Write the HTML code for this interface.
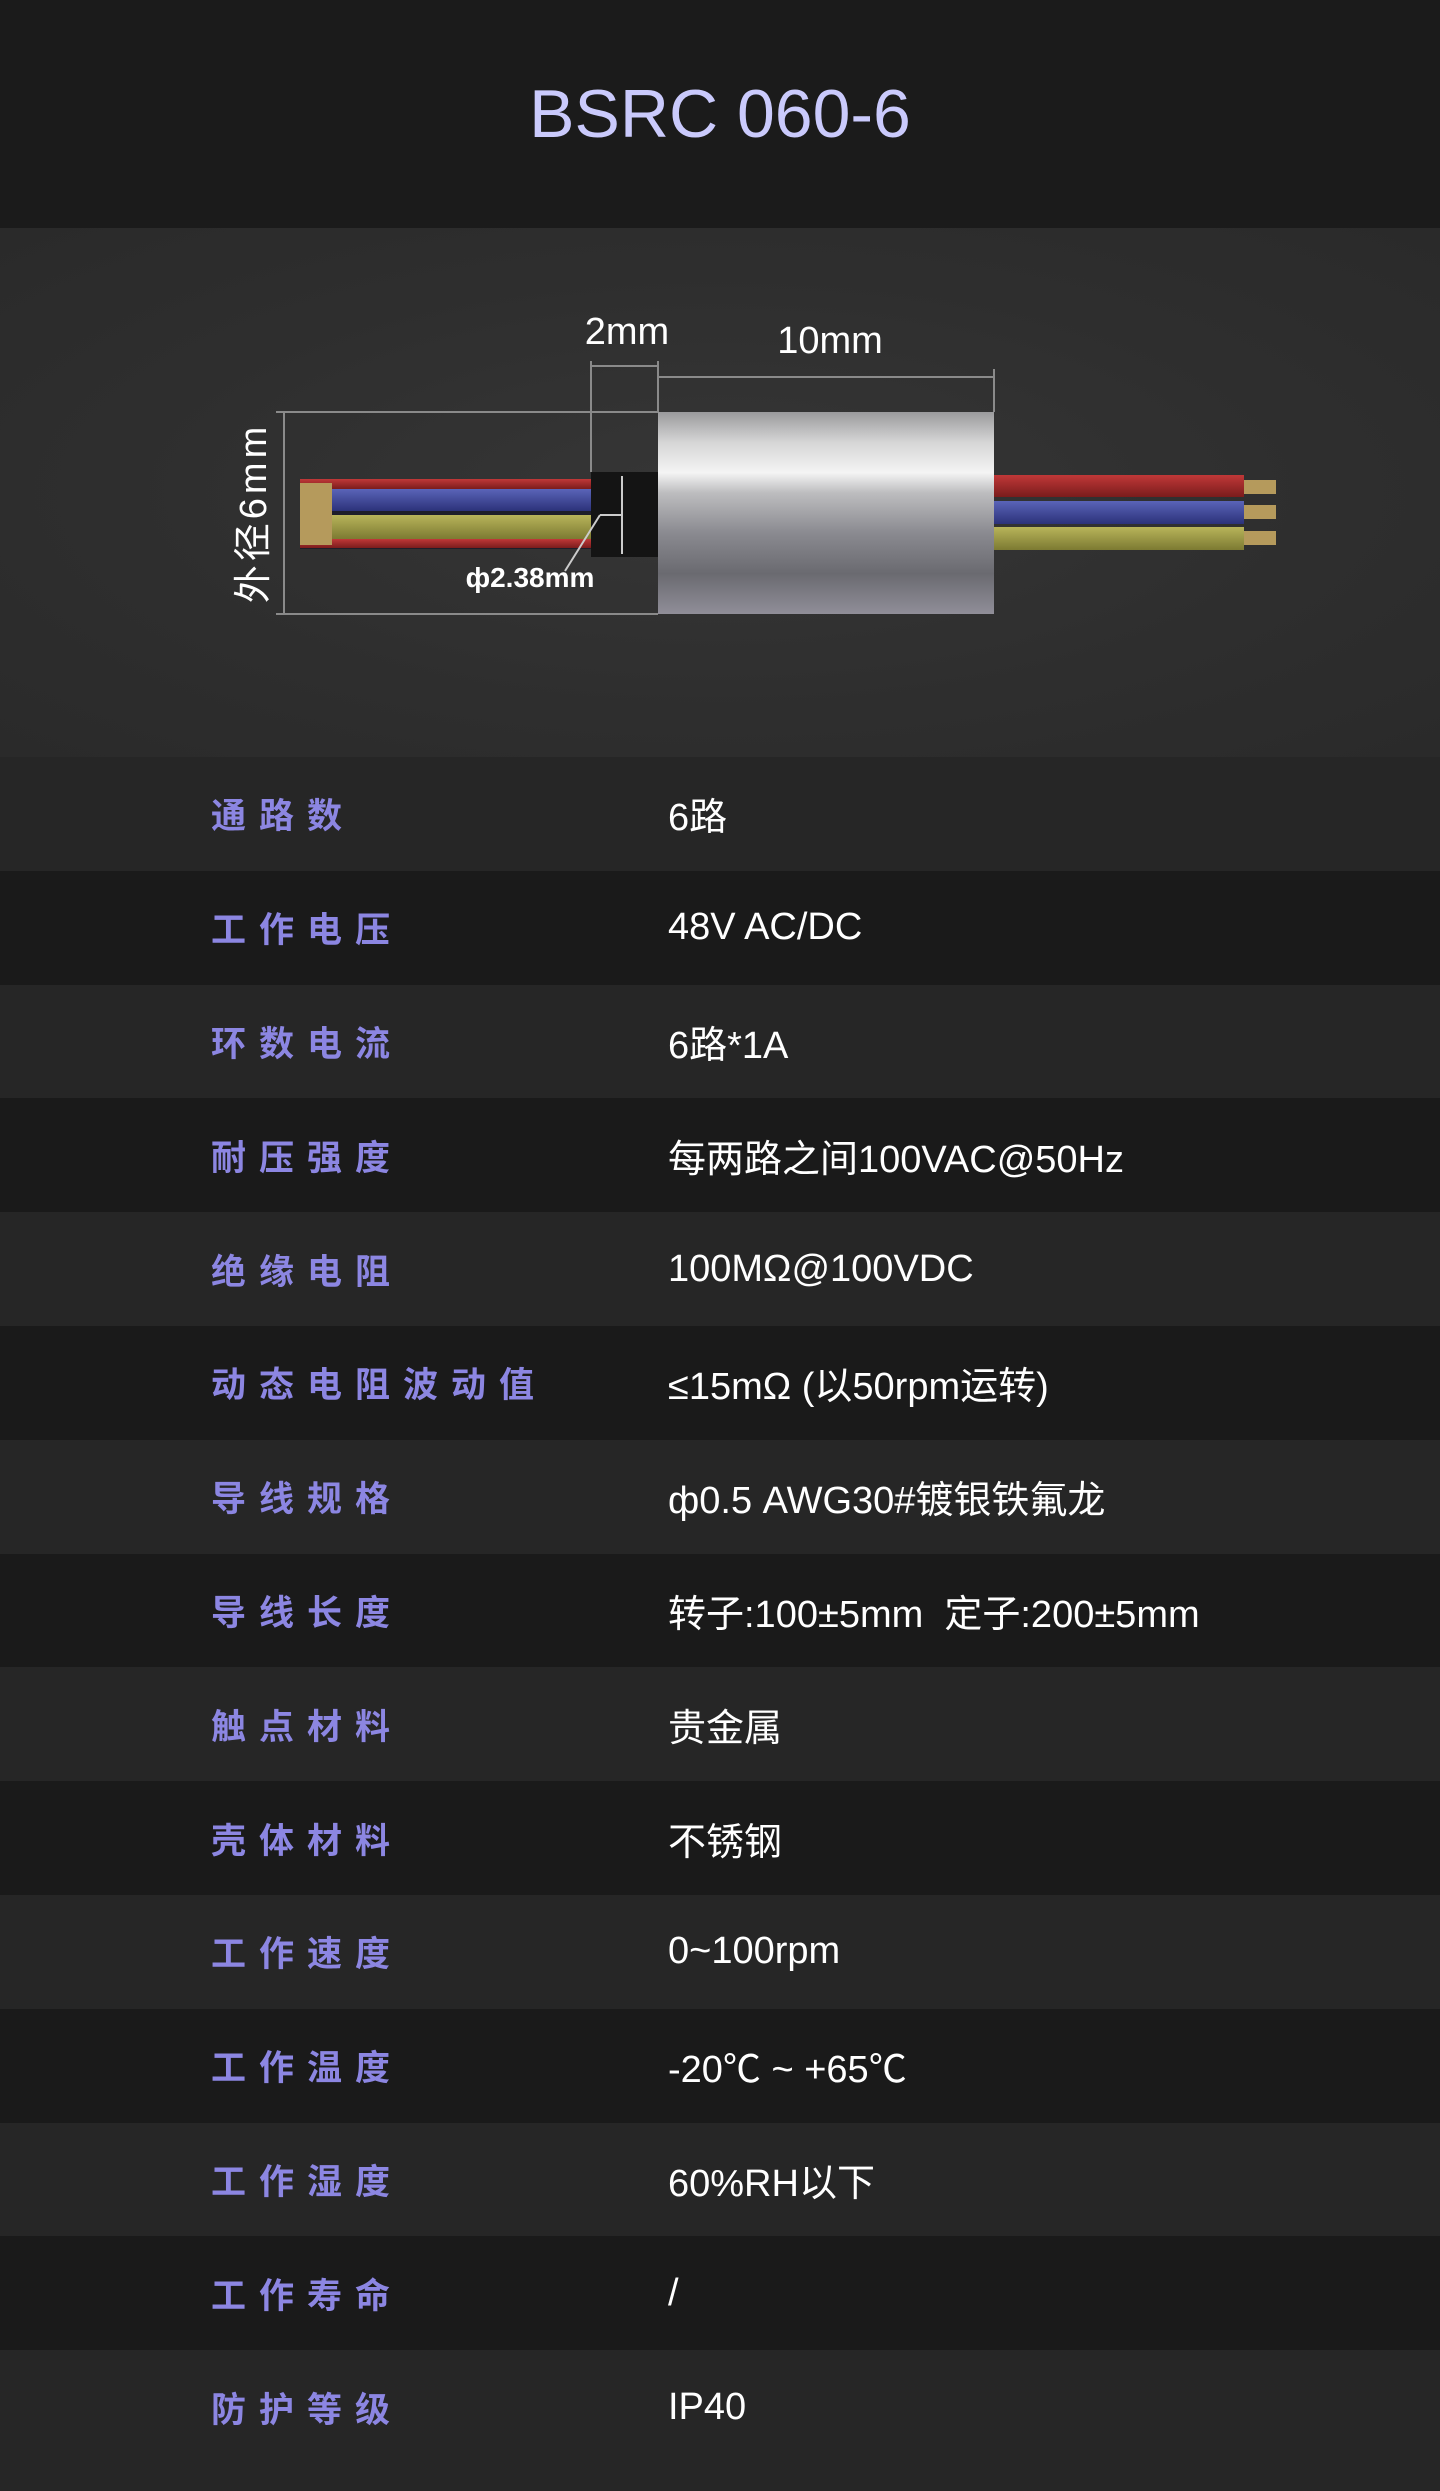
<!DOCTYPE html>
<html><head><meta charset="utf-8">
<style>
*{margin:0;padding:0;box-sizing:border-box}
body{width:1440px;height:2491px;background:#262626;font-family:"Liberation Sans","Noto Sans CJK SC",sans-serif;overflow:hidden}
.hdr{height:228px;background:#1b1b1b;text-align:center;color:#cacafc;font-size:68px;line-height:228px}
.img{height:529px;background:radial-gradient(ellipse at 50% 50%,#363636 0%,#2e2e2e 60%,#2a2a2a 100%);position:relative}
.row{height:113.8px;display:flex;align-items:center}
.row:nth-child(odd){background:#262626}
.row:nth-child(even){background:#1a1a1a}
.lab{width:668px;flex-shrink:0;padding-left:211px;color:#8c86e2;font-weight:bold;font-size:35px;letter-spacing:13px;white-space:nowrap}
.val{color:#fff;font-size:38px;white-space:nowrap}
</style></head><body>
<div class="hdr">BSRC 060-6</div>
<div class="img">
<svg width="1440" height="529" viewBox="0 227 1440 529" style="position:absolute;left:0;top:0">
<defs>
<linearGradient id="sil" x1="0" y1="0" x2="0" y2="1">
<stop offset="0" stop-color="#9a9a9c"/><stop offset="0.15" stop-color="#d6d6d6"/><stop offset="0.3" stop-color="#f4f4f4"/><stop offset="0.4" stop-color="#bdbdbf"/><stop offset="0.6" stop-color="#8a8a90"/><stop offset="0.8" stop-color="#6a6a70"/><stop offset="1" stop-color="#908e98"/>
</linearGradient>
<linearGradient id="red" x1="0" y1="0" x2="0" y2="1"><stop offset="0" stop-color="#c03838"/><stop offset="1" stop-color="#7a1c1c"/></linearGradient>
<linearGradient id="blu" x1="0" y1="0" x2="0" y2="1"><stop offset="0" stop-color="#5a64b8"/><stop offset="1" stop-color="#2c327a"/></linearGradient>
<linearGradient id="yel" x1="0" y1="0" x2="0" y2="1"><stop offset="0" stop-color="#b8b45a"/><stop offset="1" stop-color="#7c7a32"/></linearGradient>
</defs>
<rect x="300" y="478" width="291" height="70" fill="#1e1e2a"/>
<rect x="300" y="478" width="291" height="10" fill="url(#red)"/>
<rect x="300" y="488" width="291" height="22" fill="url(#blu)"/>
<rect x="300" y="514" width="291" height="24" fill="url(#yel)"/>
<rect x="300" y="538" width="291" height="9" fill="url(#red)"/>
<rect x="300" y="482" width="32" height="62" fill="#b59a5c"/>
<rect x="591" y="471" width="68" height="85" fill="#141414"/>
<rect x="658" y="411" width="336" height="202" fill="url(#sil)"/>
<rect x="994" y="474" width="250" height="22" fill="url(#red)"/>
<rect x="994" y="500" width="250" height="23" fill="url(#blu)"/>
<rect x="994" y="526" width="250" height="23" fill="url(#yel)"/>
<rect x="1244" y="479" width="32" height="14" fill="#b59a5c"/>
<rect x="1244" y="504" width="32" height="14" fill="#b59a5c"/>
<rect x="1244" y="530" width="32" height="14" fill="#b59a5c"/>
<g stroke="#8a8a8a" stroke-width="2" fill="none">
<line x1="276" y1="411" x2="658" y2="411"/>
<line x1="276" y1="613" x2="658" y2="613"/>
<line x1="284" y1="411" x2="284" y2="613"/>
<line x1="591" y1="360" x2="591" y2="471"/>
<line x1="658" y1="360" x2="658" y2="411"/>
<line x1="591" y1="365" x2="658" y2="365"/>
<line x1="658" y1="376" x2="994" y2="376"/>
<line x1="994" y1="368" x2="994" y2="411"/>
<line x1="622" y1="475" x2="622" y2="553" stroke="#ccc"/>
<line x1="622" y1="514" x2="600" y2="514" stroke="#ccc"/>
<line x1="600" y1="514" x2="565" y2="570" stroke="#ccc"/>
</g>
<g font-family="Liberation Sans,Noto Sans CJK SC,sans-serif" fill="#fff">
<text x="627" y="343" font-size="38" text-anchor="middle">2mm</text>
<text x="830" y="352" font-size="38" text-anchor="middle">10mm</text>
<text x="530" y="586" font-size="28" font-weight="bold" text-anchor="middle">ф2.38mm</text>
<text transform="translate(266,512) rotate(-90)" font-size="38" text-anchor="middle" letter-spacing="4">外径6mm</text>
</g>
</svg>
</div>
<div>
<div class="row"><div class="lab">通路数</div><div class="val">6路</div></div>
<div class="row"><div class="lab">工作电压</div><div class="val">48V AC/DC</div></div>
<div class="row"><div class="lab">环数电流</div><div class="val">6路*1A</div></div>
<div class="row"><div class="lab">耐压强度</div><div class="val">每两路之间100VAC@50Hz</div></div>
<div class="row"><div class="lab">绝缘电阻</div><div class="val">100MΩ@100VDC</div></div>
<div class="row"><div class="lab">动态电阻波动值</div><div class="val">≤15mΩ (以50rpm运转)</div></div>
<div class="row"><div class="lab">导线规格</div><div class="val">ф0.5 AWG30#镀银铁氟龙</div></div>
<div class="row"><div class="lab">导线长度</div><div class="val">转子:100±5mm&nbsp; 定子:200±5mm</div></div>
<div class="row"><div class="lab">触点材料</div><div class="val">贵金属</div></div>
<div class="row"><div class="lab">壳体材料</div><div class="val">不锈钢</div></div>
<div class="row"><div class="lab">工作速度</div><div class="val">0~100rpm</div></div>
<div class="row"><div class="lab">工作温度</div><div class="val">-20℃ ~ +65℃</div></div>
<div class="row"><div class="lab">工作湿度</div><div class="val">60%RH以下</div></div>
<div class="row"><div class="lab">工作寿命</div><div class="val">/</div></div>
<div class="row"><div class="lab">防护等级</div><div class="val">IP40</div></div>
</div>
</body></html>
